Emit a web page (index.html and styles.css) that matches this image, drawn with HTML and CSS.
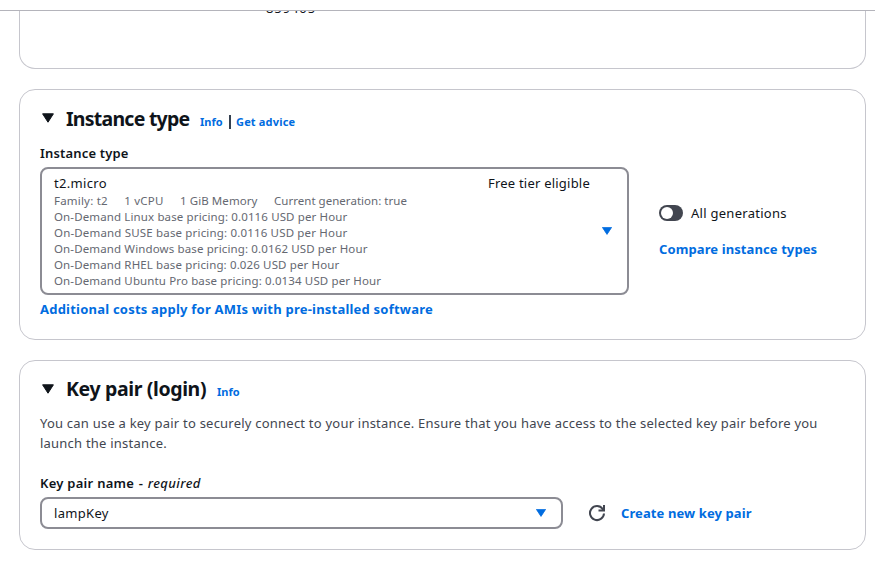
FILE: index.html
```html
<!DOCTYPE html>
<html lang="en">
<head>
<meta charset="utf-8">
<title>Launch an instance</title>
<link rel="stylesheet" href="styles.css">
</head>
<body>
<div class="topbar"></div>
<main class="content">
  <section class="panel panel-image"><span class="image-id">859405</span></section>

  <section class="panel panel-instance">
    <header class="panel-header">
      <svg class="caret" width="12" height="10" viewBox="0 0 12 10"><path d="M.6.8h10.8L6 9.2z" fill="#0f141a" stroke="#0f141a" stroke-linejoin="round"/></svg>
      <h2 class="title title-instance">Instance type</h2>
      <a class="small-link info">Info</a><span class="divider"></span><a class="small-link advice">Get advice</a>
    </header>
    <div class="instance-grid">
      <div class="instance-field">
        <div class="label">Instance type</div>
        <div class="select select-instance">
          <div class="option">
            <div class="option-title"><span class="value">t2.micro</span><span class="free">Free tier eligible</span></div>
            <div class="specs"><span>Family: t2</span><span>1 vCPU</span><span class="memory">1 GiB Memory</span><span class="generation">Current generation: true</span></div>
            <div class="price">On-Demand Linux base pricing: 0.0116 USD per Hour</div>
            <div class="price price-suse">On-Demand SUSE base pricing: 0.0116 USD per Hour</div>
            <div class="price">On-Demand Windows base pricing: 0.0162 USD per Hour</div>
            <div class="price">On-Demand RHEL base pricing: 0.026 USD per Hour</div>
            <div class="price">On-Demand Ubuntu Pro base pricing: 0.0134 USD per Hour</div>
          </div>
          <svg class="arrow" width="10" height="8" viewBox="0 0 10 8"><path d="M.4.4h9.2L5 7.4z" fill="#006ce0" stroke="#006ce0" stroke-width=".8" stroke-linejoin="round"/></svg>
        </div>
        <a class="link costs">Additional costs apply for AMIs with pre-installed software</a>
      </div>
      <div class="instance-side">
        <div class="toggle-row"><span class="toggle"><span class="knob"></span></span><span class="toggle-text">All generations</span></div>
        <a class="link compare">Compare instance types</a>
      </div>
    </div>
  </section>

  <section class="panel panel-key">
    <header class="panel-header">
      <svg class="caret" width="12" height="10" viewBox="0 0 12 10"><path d="M.6.8h10.8L6 9.2z" fill="#0f141a" stroke="#0f141a" stroke-linejoin="round"/></svg>
      <h2 class="title title-key">Key pair (login)</h2>
      <a class="small-link info">Info</a>
    </header>
    <p class="description">You can use a key pair to securely connect to your instance. Ensure that you have access to the selected key pair before you<br>launch the instance.</p>
    <div class="label key-label">Key pair name <span class="dash">-</span> <i>required</i></div>
    <div class="key-row">
      <div class="select select-key"><span class="value">lampKey</span>
        <svg class="arrow" width="10" height="8" viewBox="0 0 10 8"><path d="M.4.4h9.2L5 7.4z" fill="#006ce0" stroke="#006ce0" stroke-width=".8" stroke-linejoin="round"/></svg>
      </div>
      <svg class="refresh" width="18" height="18" viewBox="0 0 18 18" fill="none" stroke="#424650" stroke-width="2"><path d="M16 9.5A7 7 0 1 1 14.7 5L16 6.2M16 1v5.5h-5.5"/></svg>
      <a class="link create">Create new key pair</a>
    </div>
  </section>
</main>
</body>
</html>
```
FILE: styles.css
```css
* { box-sizing: border-box; }
body { margin: 0; background: #fff; color: #0f141a; font: 13px/20px "Noto Sans", sans-serif; height: 561px; overflow: hidden; }
.topbar { height: 11px; border-bottom: 1px solid #b4b4bb; }
.content { padding: 0 9px 0 19px; display: flex; flex-direction: column; }
.panel { border: 1px solid #c6c6cd; border-radius: 16px; padding: 0 20px; white-space: nowrap; }
.panel-image { height: 58px; border-top: 0; border-radius: 0 0 16px 16px; overflow: hidden; padding-left: 246px; }
.image-id { display: block; margin-top: -13px; letter-spacing: .9px; }
.panel-instance { height: 251px; margin-top: 20px; }
.panel-key { height: 190px; margin-top: 20px; }
.panel-header { display: flex; align-items: baseline; height: 53px; padding-top: 17px; }
.panel-key .panel-header { height: 52px; padding-top: 16px; }
.caret { margin: 0 12px 0 2px; flex: none; position: relative; top: -3px; }
.panel-key .caret { top: -2px; }
.title { margin: 0; font-size: 19.5px; line-height: 24px; font-weight: 700; width: 123px; letter-spacing: -.75px; }
.title-key { width: 140px; letter-spacing: -.37px; }
.small-link { color: #006ce0; font-size: 11px; line-height: 16px; font-weight: 700; }
.info { margin-left: 11px; width: 23px; }
.advice { letter-spacing: .17px; }
.divider { width: 2px; height: 14px; background: #354150; align-self: flex-start; margin: 8px 5px 0 6px; }
.instance-grid { display: flex; }
.instance-field { width: 589px; }
.label { font-weight: 600; line-height: 20px; margin-bottom: 4px; letter-spacing: .17px; }
.select { border: 2px solid #8c8c94; border-radius: 8px; display: flex; align-items: center; justify-content: space-between; }
.value { letter-spacing: .32px; }
.select-instance { height: 128px; padding: 0 15px 0 12px; }
.option { width: 537px; }
.option-title { display: flex; justify-content: space-between; line-height: 20px; margin-bottom: -1px; }
.free { letter-spacing: .22px; margin-right: 1px; }
.specs, .price { color: #656871; font-size: 11.5px; line-height: 16px; letter-spacing: .13px; }
.price-suse { letter-spacing: .17px; }
.specs { display: flex; gap: 16.5px; line-height: 17px; letter-spacing: .2px; }
.memory { letter-spacing: .07px; }
.generation { letter-spacing: .03px; }
.arrow { flex: none; }
.link { display: block; color: #006ce0; font-weight: 700; line-height: 20px; letter-spacing: .1px; }
.costs { margin-top: 4px; letter-spacing: .22px; }
.instance-side { margin: 60px 0 0 30px; }
.toggle-row { display: flex; align-items: center; gap: 8px; }
.toggle { width: 24px; height: 16px; border-radius: 8px; background: #424650; padding: 2px; }
.toggle-text { letter-spacing: .27px; }
.knob { display: block; width: 12px; height: 12px; border-radius: 50%; background: #fff; }
.compare { margin-top: 16px; }
.description { margin: 0 0 20px; color: #424650; line-height: 20px; letter-spacing: .22px; }
.key-label { letter-spacing: .27px; }
.dash { margin: 0 .9px; }
.key-label i { font-weight: 500; letter-spacing: .42px; }
.key-row { display: flex; align-items: center; }
.select-key { width: 523px; height: 32px; padding: 0 15px 0 12px; }
.refresh { margin: 0 15px 0 25px; }
```
